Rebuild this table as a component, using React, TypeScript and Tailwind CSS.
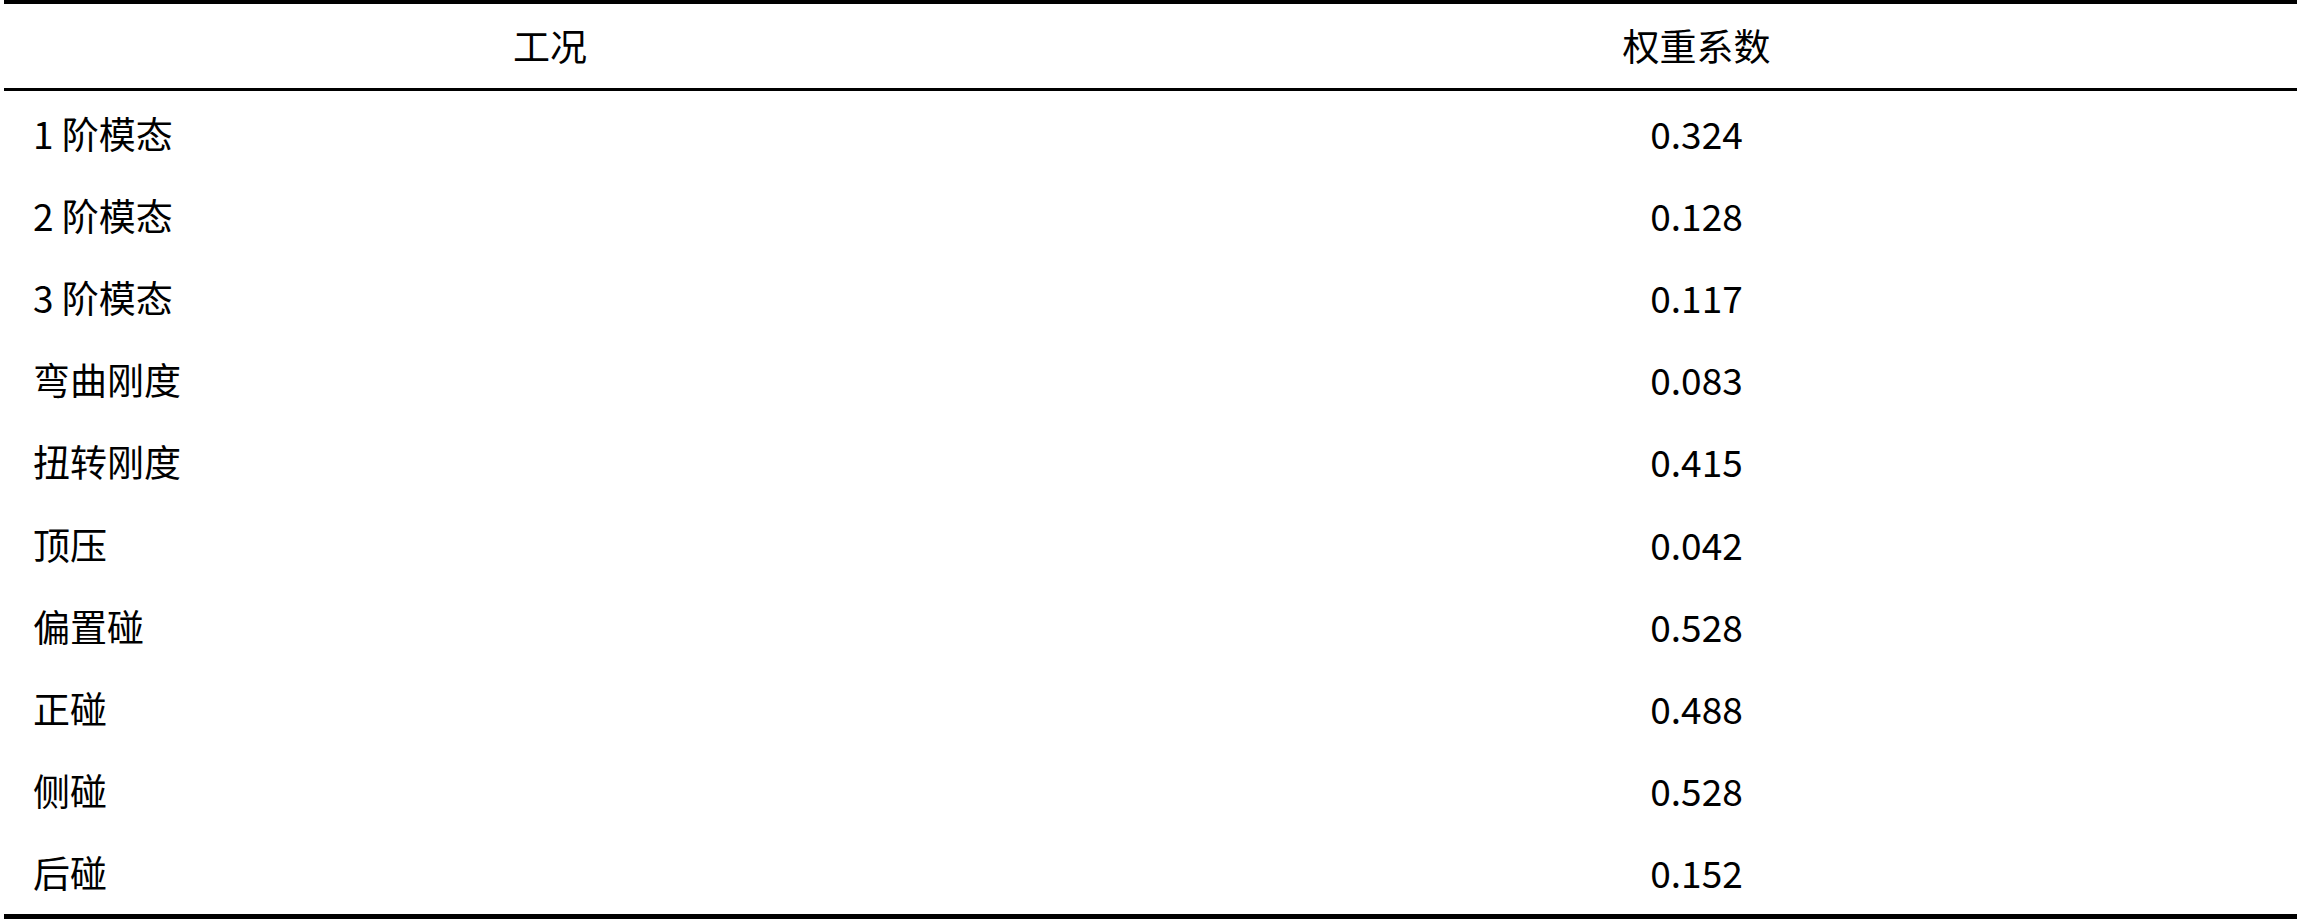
interface WeightRow {
    label: string;
    weight: string;
}

const rows: WeightRow[] = [
    { label: '1 阶模态', weight: '0.324' },
    { label: '2 阶模态', weight: '0.128' },
    { label: '3 阶模态', weight: '0.117' },
    { label: '弯曲刚度', weight: '0.083' },
    { label: '扭转刚度', weight: '0.415' },
    { label: '顶压', weight: '0.042' },
    { label: '偏置碰', weight: '0.528' },
    { label: '正碰', weight: '0.488' },
    { label: '侧碰', weight: '0.528' },
    { label: '后碰', weight: '0.152' },
];

export default function App() {
    return (
        <div className="min-h-screen w-full bg-white text-black font-['Noto_Sans_CJK_SC',sans-serif]">
            <table className="ml-1 w-[2293px] border-collapse table-fixed text-[37px]">
                <colgroup>
                    <col className="w-[1092px]" />
                    <col />
                </colgroup>
                <thead>
                    <tr className="h-[87px] border-t-4 border-b-[3px] border-black">
                        <th className="font-normal text-center align-middle p-0">工况</th>
                        <th className="font-normal text-center align-middle p-0">权重系数</th>
                    </tr>
                </thead>
                <tbody className="border-b-[5px] border-black">
                    {rows.map((row, idx) => (
                        <tr key={row.label} className={idx === rows.length - 1 ? 'h-[86px]' : 'h-[82.2px]'}>
                            {/* slight top padding pushes the text to sit a touch low, like the source */}
                            <td className="pl-[29px] pt-[4px] pb-0 pr-0 align-top">
                                <div className="h-[78px] flex items-center">{row.label}</div>
                            </td>
                            <td className="text-center pt-[4px] pb-0 px-0 align-top">
                                <div className="h-[78px] flex items-center justify-center">{row.weight}</div>
                            </td>
                        </tr>
                    ))}
                </tbody>
            </table>
        </div>
    );
}
